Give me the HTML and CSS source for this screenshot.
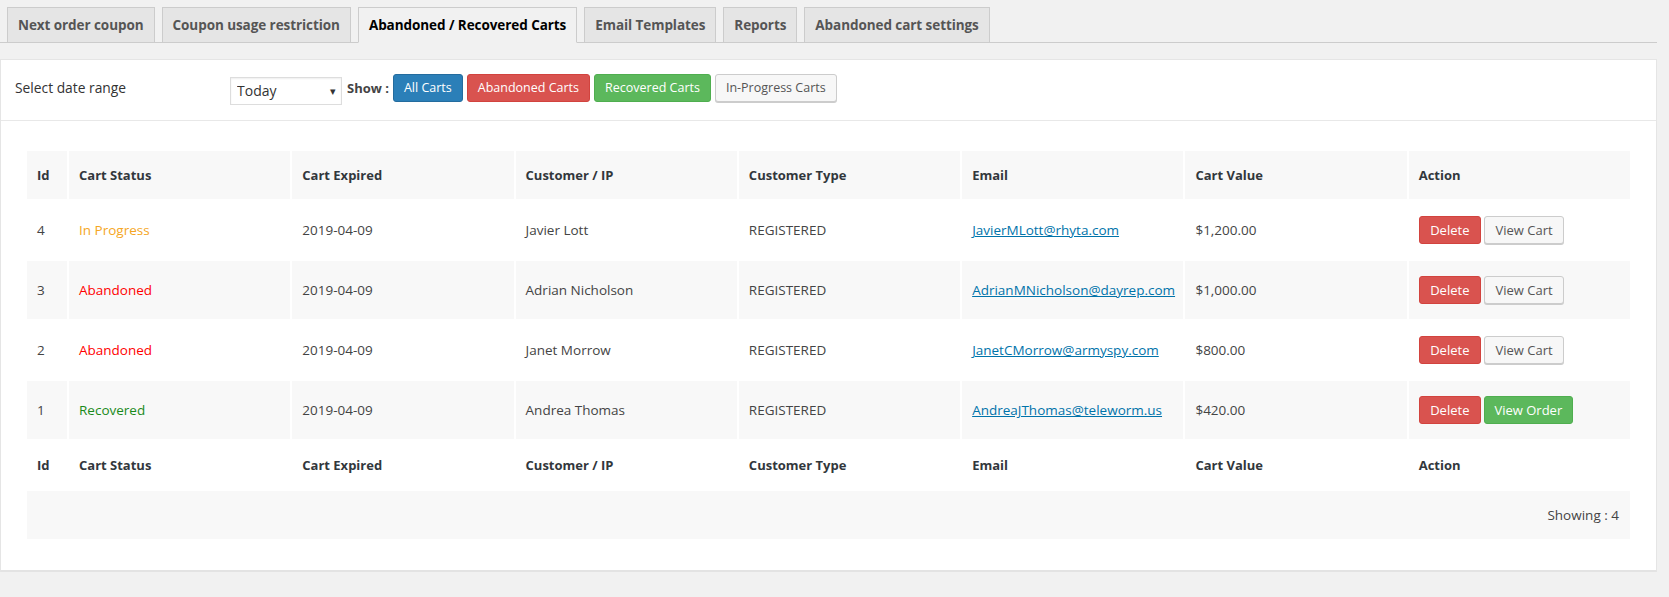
FILE: index.html
```html
<!DOCTYPE html>
<html lang="en">
<head>
<meta charset="utf-8">
<title>Abandoned / Recovered Carts</title>
<link rel="stylesheet" href="styles.css">
</head>
<body>
<div class="wrap">
  <nav class="nav-tabs">
    <a class="nav-tab" href="#">Next order coupon</a>
    <a class="nav-tab" href="#">Coupon usage restriction</a>
    <a class="nav-tab nav-tab-active" href="#">Abandoned / Recovered Carts</a>
    <a class="nav-tab" href="#">Email Templates</a>
    <a class="nav-tab" href="#">Reports</a>
    <a class="nav-tab" href="#">Abandoned cart settings</a>
  </nav>

  <div class="panel">
    <div class="filters">
      <span class="filter-label">Select date range</span>
      <span class="select-wrap">
        <select class="date-select">
          <option>Today</option>
        </select>
        <span class="caret">▾</span>
      </span>
      <span class="show-label">Show :</span>
      <a class="btn btn-blue" href="#">All Carts</a>
      <a class="btn btn-red" href="#">Abandoned Carts</a>
      <a class="btn btn-green" href="#">Recovered Carts</a>
      <a class="btn btn-default" href="#">In-Progress Carts</a>
    </div>

    <div class="content">
      <table class="carts">
        <colgroup>
          <col class="col-id">
          <col><col><col><col><col><col><col>
        </colgroup>
        <thead>
          <tr class="head-row">
            <th>Id</th><th>Cart Status</th><th>Cart Expired</th><th>Customer / IP</th><th>Customer Type</th><th>Email</th><th>Cart Value</th><th>Action</th>
          </tr>
        </thead>
        <tbody>
          <tr class="row-white">
            <td>4</td><td class="st-progress">In Progress</td><td>2019-04-09</td><td>Javier Lott</td><td>REGISTERED</td>
            <td><a class="mail" href="#">JavierMLott@rhyta.com</a></td><td>$1,200.00</td>
            <td><span class="actions"><a class="btn btn-red" href="#">Delete</a><a class="btn btn-default" href="#">View Cart</a></span></td>
          </tr>
          <tr class="row-gray">
            <td>3</td><td class="st-abandoned">Abandoned</td><td>2019-04-09</td><td>Adrian Nicholson</td><td>REGISTERED</td>
            <td><a class="mail" href="#">AdrianMNicholson@dayrep.com</a></td><td>$1,000.00</td>
            <td><span class="actions"><a class="btn btn-red" href="#">Delete</a><a class="btn btn-default" href="#">View Cart</a></span></td>
          </tr>
          <tr class="row-white">
            <td>2</td><td class="st-abandoned">Abandoned</td><td>2019-04-09</td><td>Janet Morrow</td><td>REGISTERED</td>
            <td><a class="mail" href="#">JanetCMorrow@armyspy.com</a></td><td>$800.00</td>
            <td><span class="actions"><a class="btn btn-red" href="#">Delete</a><a class="btn btn-default" href="#">View Cart</a></span></td>
          </tr>
          <tr class="row-gray">
            <td>1</td><td class="st-recovered">Recovered</td><td>2019-04-09</td><td>Andrea Thomas</td><td>REGISTERED</td>
            <td><a class="mail" href="#">AndreaJThomas@teleworm.us</a></td><td>$420.00</td>
            <td><span class="actions"><a class="btn btn-red" href="#">Delete</a><a class="btn btn-green" href="#">View Order</a></span></td>
          </tr>
        </tbody>
        <tfoot>
          <tr class="foot-head">
            <th>Id</th><th>Cart Status</th><th>Cart Expired</th><th>Customer / IP</th><th>Customer Type</th><th>Email</th><th>Cart Value</th><th>Action</th>
          </tr>
          <tr class="foot-info">
            <td colspan="8">Showing : 4</td>
          </tr>
        </tfoot>
      </table>
    </div>
  </div>
</div>
</body>
</html>
```

FILE: styles.css
```css
html, body {
  margin: 0;
  padding: 0;
  background: #f1f1f1;
}

body {
  font-family: "Open Sans", "Noto Sans", sans-serif;
  font-size: 13.5px;
  color: #444;
}

.wrap {
  margin-right: 12px;
}

/* ---------- tabs ---------- */
.nav-tabs {
  display: flex;
  gap: 7px;
  padding: 7px 0 0 7px;
  border-bottom: 1px solid #ccc;
}

.nav-tab {
  display: block;
  padding: 5px 10px;
  line-height: 24px;
  font-size: 13.5px;
  font-weight: 700;
  letter-spacing: -0.07px;
  color: #555;
  background: #e5e5e5;
  border: 1px solid #ccc;
  border-bottom: none;
  text-decoration: none;
  white-space: nowrap;
}

.nav-tab-active {
  background: #f1f1f1;
  color: #000;
  margin-bottom: -1px;
  border-bottom: 1px solid #f1f1f1;
}

/* ---------- panel ---------- */
.panel {
  margin-top: 16px;
  background: #fff;
  border: 1px solid #e5e5e5;
  border-bottom: 2px solid #e3e3e3;
}

.filters {
  display: flex;
  align-items: center;
  height: 61px;
  box-sizing: border-box;
  padding: 0 14px 5px;
  border-bottom: 1px solid #e8e8e8;
}

.filter-label {
  width: 215px;
  flex: none;
  font-size: 13.8px;
  color: #333;
}

.select-wrap {
  position: relative;
  display: block;
  margin-top: 6px;
  flex: none;
}

.date-select {
  display: block;
  width: 112px;
  height: 28px;
  box-sizing: border-box;
  padding: 0 6px;
  border: 1px solid #ddd;
  box-shadow: inset 0 1px 2px rgba(0, 0, 0, 0.07);
  background: #fff;
  font-family: "Open Sans", "Noto Sans", sans-serif;
  font-size: 14px;
  color: #333;
  -webkit-appearance: none;
  appearance: none;
  border-radius: 0;
}

.caret {
  position: absolute;
  right: 6px;
  top: 6px;
  font-size: 11px;
  color: #333;
  pointer-events: none;
}

.show-label {
  margin: 0 4px 0 5px;
  font-weight: 700;
  font-size: 13px;
  color: #444;
}

.btn {
  display: inline-block;
  height: 28px;
  box-sizing: border-box;
  padding: 0 10px;
  line-height: 26px;
  border: 1px solid transparent;
  border-radius: 3px;
  font-size: 12.5px;
  text-decoration: none;
  white-space: nowrap;
  color: #fff;
}

.filters .btn {
  margin-right: 4px;
}

.actions .btn {
  font-size: 13px;
  padding: 0 10.5px;
}

.actions .btn-green {
  padding: 0 9.5px;
}

.btn-blue {
  background: #2b7fb8;
  border-color: #246c9e;
}

.btn-red {
  background: #d9534f;
  border-color: #d2433e;
}

.btn-green {
  background: #5cb85c;
  border-color: #4fae4f;
}

.btn-default {
  background: #f7f7f7;
  border-color: #ccc;
  box-shadow: 0 1px 0 #ccc;
  color: #555;
}

/* ---------- table ---------- */
.content {
  padding: 28px 24px 29px 24px;
}

.carts {
  width: 100%;
  table-layout: fixed;
  border-collapse: separate;
  border-spacing: 2px;
}

.col-id {
  width: 40px;
}

.carts th,
.carts td {
  padding: 0 10px;
  text-align: left;
  white-space: nowrap;
  overflow: hidden;
}

.carts th {
  height: 48px;
  font-size: 13px;
  font-weight: 700;
  color: #32373c;
}

.head-row th {
  background: #f8f8f8;
}

.foot-head th {
  background: #fff;
}

.carts td {
  height: 58px;
  color: #444;
}

.row-white td {
  background: #fff;
}

.row-gray td {
  background: #f8f8f8;
}

.st-progress { color: #f5a623 !important; }
.st-abandoned { color: #f00 !important; }
.st-recovered { color: #1a8a1a !important; }

.mail {
  color: #0073aa;
  text-decoration: underline;
}

.actions {
  display: flex;
  gap: 3px;
}

.foot-info td {
  height: 48px;
  background: #f8f8f8;
  text-align: right;
  padding-right: 11px;
}
```
